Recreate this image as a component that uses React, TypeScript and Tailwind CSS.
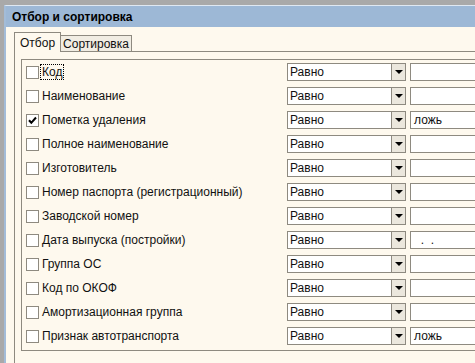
const rows = [
  { label: 'Код', value: '', focus: true },
  { label: 'Наименование', value: '' },
  { label: 'Пометка удаления', value: 'ложь', checked: true },
  { label: 'Полное наименование', value: '' },
  { label: 'Изготовитель', value: '' },
  { label: 'Номер паспорта (регистрационный)', value: '' },
  { label: 'Заводской номер', value: '' },
  { label: 'Дата выпуска (постройки)', value: '  .  .' },
  { label: 'Группа ОС', value: '' },
  { label: 'Код по ОКОФ', value: '' },
  { label: 'Амортизационная группа', value: '' },
  { label: 'Признак автотранспорта', value: 'ложь' },
]

function Row({ label, value, checked, focus }: { label: string; value: string; checked?: boolean; focus?: boolean }) {
  return (
    <div className="flex h-[24px] items-center">
      <div className="ml-[4px] flex h-[13px] w-[13px] items-center justify-center border border-[#8e8a80] bg-white">
        {checked && (
          <svg width="9" height="9" viewBox="0 0 9 9">
            <path d="M1 4.3 L3.3 6.8 L8 1.5" fill="none" stroke="#000" strokeWidth="2" />
          </svg>
        )}
      </div>
      <div className="ml-[2px] w-[246px]">
        <span className={focus ? 'outline-1 outline-dotted outline-black px-[1px]' : 'px-[1px]'}>{label}</span>
      </div>
      <div className="flex h-[18px] w-[119px] border border-[#8e8a80] bg-white">
        <div className="flex-1 pl-[2px] leading-[16px]">Равно</div>
        <div className="flex w-[14px] items-center justify-center border-l border-[#8e8a80] bg-[#ebe7dd]">
          <div className="h-0 w-0 border-x-[4px] border-t-[4px] border-x-transparent border-t-black" />
        </div>
      </div>
      <div className="ml-[4px] h-[18px] w-[120px] whitespace-pre border border-[#8e8a80] bg-white pl-[3px] leading-[16px]">
        {value}
      </div>
    </div>
  )
}

export default function App() {
  return (
    <div
      className="h-[363px] w-[475px] overflow-hidden bg-[#a9a9a9] pl-[4px] pt-[5px] text-[12px] text-[#111]"
      style={{ fontFamily: '"Liberation Sans", Arial, sans-serif' }}
    >
      <div className="h-[400px] w-[560px] border-l-2 border-t border-l-[#a3bcd8] border-t-[#dfe8f2] bg-[#fef9ee]">
        <div className="flex h-[21px] items-center bg-[#9db8d6] pl-[6px] text-[12px] font-bold text-black">
          Отбор и сортировка
        </div>
        <div className="pl-[8px] pt-[5px]">
          <div className="flex h-[19px] items-end">
            <div className="relative z-10 -mb-px flex h-[20px] items-center border border-b-0 border-[#8e8a80] bg-[#fef9ee] px-[5px]">
              Отбор
            </div>
            <div className="flex h-[16px] items-center border-r border-t border-[#8e8a80] bg-[#f1ede3] px-[2px]">
              Сортировка
            </div>
          </div>
          <div className="border-l border-t border-[#8e8a80] pl-[6px] pt-[7px]">
            <div className="w-[600px] border border-[#8e8a80] pb-[2px]">
              {rows.map((r) => (
                <Row key={r.label} {...r} />
              ))}
            </div>
            <div className="h-[20px]" />
          </div>
        </div>
      </div>
    </div>
  )
}
